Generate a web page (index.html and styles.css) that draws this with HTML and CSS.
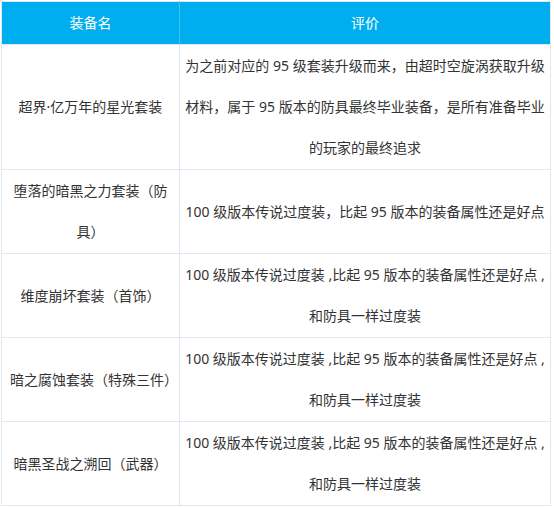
FILE: index.html
```html
<!DOCTYPE html>
<html lang="zh-CN">
<head>
<meta charset="utf-8">
<title>装备评价</title>
<link rel="stylesheet" href="styles.css">
</head>
<body>
<table class="gear">
  <colgroup>
    <col class="col-name">
    <col class="col-eval">
  </colgroup>
  <thead>
    <tr>
      <th>装备名</th>
      <th>评价</th>
    </tr>
  </thead>
  <tbody>
    <tr>
      <td>超界·亿万年的星光套装</td>
      <td>为之前对应的 95 级套装升级而来，由超时空旋涡获取升级材料，属于 95 版本的防具最终毕业装备，是所有准备毕业的玩家的最终追求</td>
    </tr>
    <tr>
      <td>堕落的暗黑之力套装（防具）</td>
      <td>100 级版本传说过度装，比起 95 版本的装备属性还是好点</td>
    </tr>
    <tr>
      <td>维度崩坏套装（首饰）</td>
      <td><span class="line">100 级版本传说过度装 ,比起 95 版本的装备属性还是好点 ,</span><br>和防具一样过度装</td>
    </tr>
    <tr>
      <td>暗之腐蚀套装（特殊三件）</td>
      <td><span class="line">100 级版本传说过度装 ,比起 95 版本的装备属性还是好点 ,</span><br>和防具一样过度装</td>
    </tr>
    <tr>
      <td>暗黑圣战之溯回（武器）</td>
      <td><span class="line">100 级版本传说过度装 ,比起 95 版本的装备属性还是好点 ,</span><br>和防具一样过度装</td>
    </tr>
  </tbody>
</table>
</body>
</html>
```

FILE: styles.css
```css
html, body {
  margin: 0;
  padding: 0;
  background: #ffffff;
}

body {
  padding: 1px 0 0 1px;
  font-family: "Noto Sans", "Noto Sans CJK SC", sans-serif;
  font-size: 14px;
  color: #333333;
}

.gear {
  border-collapse: collapse;
  width: 550px;
  table-layout: fixed;
  border: 1px solid #dfe8f2;
}

.col-name {
  width: 178px;
}

.gear th {
  background: #00aeef;
  color: #ffffff;
  font-weight: normal;
  height: 42px;
  line-height: 42px;
  padding: 0;
  border: 1px solid #dfe8f2;
  border-right-color: #45c2f2;
  text-align: center;
}

.gear th:last-child {
  border-right-color: #dfe8f2;
}

.gear td {
  border: 1px solid #dfe8f2;
  line-height: 41px;
  padding: 0 8px 1px;
  text-align: center;
  vertical-align: middle;
}

.gear td:last-child {
  padding: 0 4px 1px;
}

.line {
  white-space: nowrap;
}
```
